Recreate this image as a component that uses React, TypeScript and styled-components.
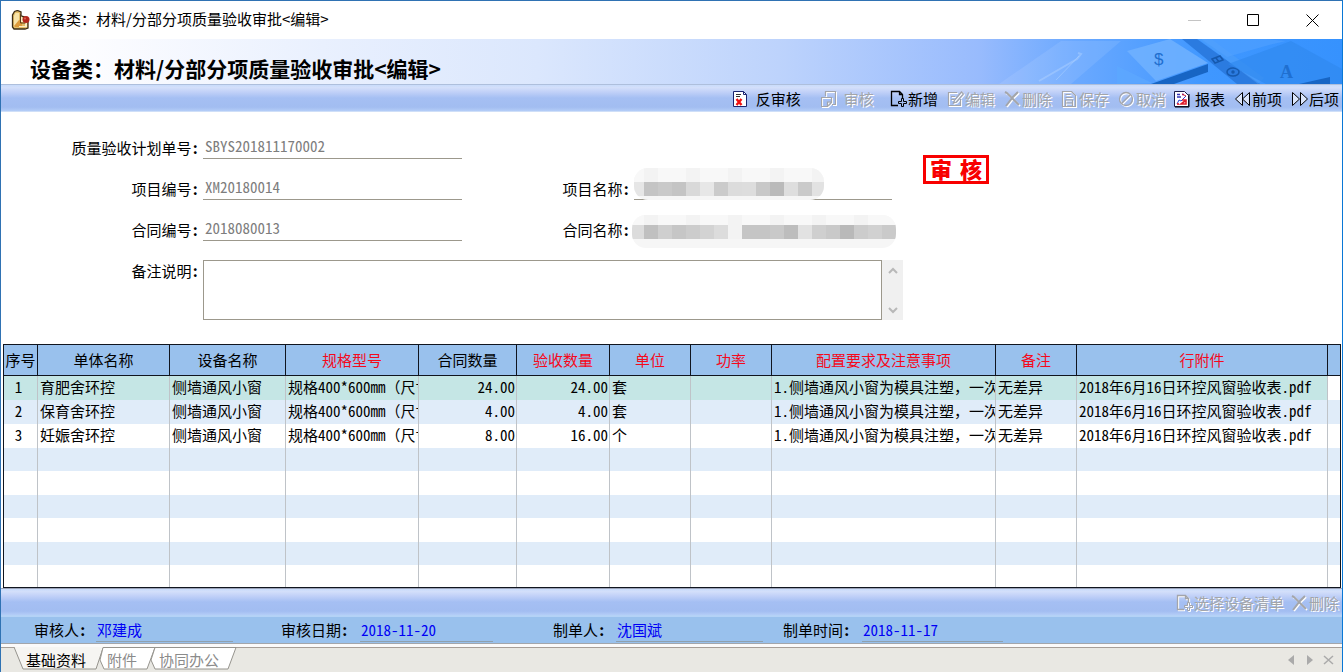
import React from "react";
import styled, { createGlobalStyle, css } from "styled-components";

const GlobalStyle = createGlobalStyle`
  * { box-sizing: border-box; }
  body { margin: 0; background: #fff; }
  body, button, input, textarea {
    font-family: "Noto Sans CJK SC", "Liberation Sans", sans-serif;
    font-size: 15px;
    line-height: 20px;
    font-feature-settings: "hwid";
    color: #000;
  }
  button { border: 0; padding: 0; background: none; white-space: nowrap; }
`;

const Window = styled.div`
  min-height: 100vh;
  display: flex;
  flex-direction: column;
  border: 1px solid #2f72b3;
  border-right-color: #0a78d6;
  border-bottom: 0;
  background: #fff;
`;

/* ---------- title bar ---------- */
const TitleBar = styled.header`
  display: flex;
  align-items: center;
  height: 38px;
  padding-left: 10px;
`;
const WindowTitle = styled.span`
  margin-left: 5px;
  padding-bottom: 2px;
  flex: 1;
  font-feature-settings: normal;
`;
const CaptionButton = styled.button`
  display: flex;
  align-items: center;
  justify-content: center;
  width: 59px;
  height: 38px;
`;

/* ---------- banner ---------- */
const Banner = styled.div`
  display: flex;
  justify-content: space-between;
  align-items: center;
  height: 45px;
  padding-left: 29px;
  background: linear-gradient(90deg, #fff 0, #fdfdff 6%, #e9f0fe 24%, #dbe7fd 40%, #bdd3fc 58%, #98bbfd 73%, #6ba9ff 80%, #3f97ff 90%, #3692fe 100%);
`;
const Heading = styled.h1`
  margin: 0;
  padding-top: 13px;
  font-size: 21px;
  line-height: 28px;
  font-weight: 700;
  font-feature-settings: normal;
  white-space: nowrap;
`;

/* ---------- tool bars ---------- */
const ToolStrip = styled.div`
  display: flex;
  justify-content: flex-end;
  align-items: center;
  padding: 2px 3px 0 0;
  background: linear-gradient(#c9dcfb 0, #d3dffa 10%, #c3d2f8 25%, #a5bff3 50%, #a2bdf1 85%, #b4cdf7 100%);
`;
const TopTools = styled(ToolStrip)`
  height: 28px;
  border-top: 1px solid #aebfdc;
  border-bottom: 1px solid #cfdff8;
`;
const ListTools = styled(ToolStrip)`
  height: 29px;
  gap: 7px;
  border-top: 1px solid #9aa2b8;
  border-bottom: 2px solid #b4d2f6;
`;
const ToolGroup = styled.div<{ $gap: number; $after: number }>`
  display: flex;
  gap: ${(p) => p.$gap}px;
  margin-right: ${(p) => p.$after}px;
`;
const ToolButton = styled.button<{ $gap?: number }>`
  display: flex;
  align-items: center;
  gap: ${(p) => p.$gap ?? 1}px;
  ${(p) =>
    p.disabled &&
    css`
      color: #a3a5aa;
      text-shadow: 1px 1px 0 #fff;
      svg { filter: drop-shadow(1px 1px 0 #fff); }
    `}
`;

/* ---------- form ---------- */
const Form = styled.form`
  position: relative;
  display: grid;
  grid-template-columns: 198px 259px 164px 258px;
  column-gap: 4px;
  align-content: start;
  padding: 25px 0 24px;
`;
const FieldLabel = styled.label`
  padding-top: 1px;
  text-align: right;
  white-space: nowrap;
  &::after { content: ":"; font-weight: 700; }
`;
const Field = styled.div<{ $newLine?: boolean }>`
  position: relative;
  height: 41px;
`;
const RowFiller = styled.div`
  grid-column: 3 / -1;
`;
const LineInput = styled.input`
  display: block;
  width: 100%;
  height: 22px;
  padding: 0 2px 4px;
  border: 0;
  border-bottom: 1px solid #9c988c;
  border-radius: 0;
  background: transparent;
  color: #7d7d7d;
  outline: 0;
`;
const Mosaic = styled.svg<{ $left: number; $top: number }>`
  position: absolute;
  left: ${(p) => p.$left}px;
  top: ${(p) => p.$top}px;
`;
const NoteBox = styled.div`
  display: flex;
  grid-column: 2 / -1;
  height: 60px;
`;
const NoteArea = styled.textarea`
  flex: 0 0 679px;
  border: 1px solid #9c988c;
  border-radius: 0;
  resize: none;
  outline: 0;
  overflow: hidden;
`;
const ScrollTrack = styled.div`
  display: flex;
  flex: 0 0 21px;
  flex-direction: column;
  justify-content: space-between;
  background: #f0f0f0;
  button { height: 20px; line-height: 0; }
`;
const Stamp = styled.div`
  position: absolute;
  left: 922px;
  top: 43px;
  width: 66px;
  height: 29px;
  border: 3px solid #f80000;
  color: #f80000;
  font-size: 22px;
  line-height: 20px;
  font-weight: 900;
  display: flex;
  justify-content: space-around;
`;

/* ---------- table ---------- */
const GridTable = styled.table`
  table-layout: fixed;
  width: calc(100% - 3px);
  margin-left: 2px;
  border-collapse: separate;
  border-spacing: 0;
  border: 1px solid #10151f;
`;
const HeadCell = styled.th<{ $red?: boolean }>`
  height: 31px;
  padding: 0;
  font-weight: 400;
  white-space: nowrap;
  background: #99c1ed;
  color: ${(p) => (p.$red ? "#f5091c" : "#000")};
  border-right: 1px solid #10151f;
  border-bottom: 1px solid #10151f;
  &:last-child { border-right: 0; }
`;
const Row = styled.tr<{ $tone: string; $height: number }>`
  height: ${(p) => p.$height}px;
  background: ${(p) => p.$tone};
`;
const Cell = styled.td<{ $align?: string; $plain?: boolean }>`
  padding: 0 1px 2px 2px;
  overflow: hidden;
  white-space: nowrap;
  text-align: ${(p) => p.$align ?? "left"};
  border-right: 1px solid #bfc3c8;
  ${(p) => p.$align === "center" && css`padding-left: 0; padding-right: 4px;`}
  ${(p) => p.$plain && css`background: #fff;`}
  &:last-child { border-right: 0; }
`;
const FullWidth = styled.span`
  font-feature-settings: normal;
`;

/* ---------- status ---------- */
const StatusBar = styled.div`
  display: flex;
  align-items: flex-start;
  height: 27px;
  padding-left: 33px;
  background: #99c1ed;
  border-bottom: 1px solid #a3a6ab;
`;
const StatusItem = styled.div<{ $labelWidth: number; $valueWidth: number; $after: number }>`
  display: flex;
  margin-right: ${(p) => p.$after}px;
  label { width: ${(p) => p.$labelWidth}px; padding-top: 3px; white-space: nowrap; }
  label::after { content: ":"; font-weight: 700; }
  input {
    width: ${(p) => p.$valueWidth}px;
    height: 25px;
    padding: 0 1px 0;
    border: 0;
    border-bottom: 1px solid #8fa0ae;
    border-radius: 0;
    background: transparent;
    color: #0000f5;
    outline: 0;
  }
`;

/* ---------- page tabs ---------- */
const TabBar = styled.footer`
  display: flex;
  justify-content: space-between;
  flex: 1;
  min-height: 28px;
  padding-top: 3px;
  background: #fbfafa;
`;
const TabTrack = styled.nav`
  display: flex;
  flex: 1;
  align-items: flex-start;
  justify-content: space-between;
  padding: 0 7px 0 13px;
  background: #e9e8e3;
  border-top: 1px solid #a79f98;
`;
const TabList = styled.div`
  display: flex;
`;
const Tab = styled.button<{ $active?: boolean; $width: number }>`
  position: relative;
  width: ${(p) => p.$width}px;
  height: 23px;
  padding-left: ${(p) => (p.$active ? 12 : 4)}px;
  text-align: left;
  color: ${(p) => (p.$active ? "#000" : "#8b8b8b")};
  span { position: relative; }
  svg { position: absolute; left: 0; top: -1px; overflow: visible; }
`;
const TabNav = styled.div`
  display: flex;
  gap: 7px;
  padding-top: 6px;
  button { line-height: 0; }
`;

/* ---------- drawings ---------- */
const AppIcon = () => (
  <svg width="20" height="20" viewBox="0 0 20 20" aria-hidden="true">
    <path d="M1.500 17V5l2-3.500 3-1L10 2v4l4 1 3 3v8l-3 1H3Z" fill="#e3bd68" stroke="#3b2c16" strokeWidth="1.300" />
    <path d="M3 16V6l1.500-3L8 3v8l-4 6Z" fill="#f7e3a8" />
    <path d="M3 16 8 10h3v7H4Z" fill="#dd9a3c" />
    <path d="M9 5v7h5v4H8v1h8v-4" fill="#fbeec6" />
    <path d="M9.500 4v9h5" fill="none" stroke="#5a3c18" />
    <circle cx="15" cy="9.500" r="3.500" fill="#b3261c" />
    <circle cx="14" cy="8.500" r="1" fill="#e0665a" />
  </svg>
);

const BannerArt = () => (
  <svg width="343" height="45" viewBox="0 0 343 45" aria-hidden="true">
    <path d="M0 45 62 2l60 0-50 43Z" fill="#fff" opacity=".09" />
    <path d="M40 42 78 20l4-5-3-1" fill="none" stroke="#b9d8ff" strokeWidth="2" opacity=".4" />
    <path d="M57 41 80 17" stroke="#a9cfff" opacity=".6" />
    <path d="M128 12 171 0l38 24-52 18Z" fill="#72b3ff" opacity=".8" />
    <path d="m152 45 57-20v8l-34 12Z" fill="#1765c4" />
    <path d="m118 27 35 17-35 1Z" fill="#5ca7ff" opacity=".8" />
    <path d="M183 0h15l63 45h-23Z" fill="#2b7be0" />
    <path d="M200 0h12l53 39-6 6Z" fill="#4f9ff8" opacity=".5" />
    <g fill="none" stroke="#1559ae" strokeWidth="1.5">
      <path d="m213 20 8-3 3 4-8 3Zm4-1 3 4" />
      <ellipse cx="234" cy="33" rx="6" ry="4" />
      <circle cx="234" cy="33" r="1" />
    </g>
    <path d="m229 25 63-23 51 28v15h-76Z" fill="#2f88ee" opacity=".65" />
    <path d="m228 18 42-12 17-4-20-2h-65Z" fill="#55a4ff" opacity=".5" />
    <path d="m300 45 31-7v7Z" fill="#1765c4" />
    <text x="155" y="26" fontSize="17" fontWeight="400" fontFamily="Liberation Sans" fill="#1f6fd0">$</text>
    <text x="281" y="39" fontSize="18" fontWeight="700" fontFamily="Liberation Serif" fill="#1f6fd0">A</text>
  </svg>
);

type IconName = "reject" | "approve" | "add" | "edit" | "delete" | "save" | "cancel" | "report" | "prev" | "next";

const shapes: Record<IconName, React.ReactNode> = {
  reject: (
    <>
      <path d="M1.500 1.500h10l3 3v12h-13Z" fill="#fff" stroke="#1a2470" />
      <path d="M11.500 1.500v3h3" fill="none" stroke="#1a2470" />
      <path d="M4 4.500h5M4 6.500h4" stroke="#333" />
      <path d="m4.500 9 5 6m0-6-5 6" stroke="#f01010" strokeWidth="2.400" />
    </>
  ),
  approve: <path d="M4.500 6V1.500h10v13H11M.5 7.500h10v5l-4 4h-6ZM6.500 16v-4h4" strokeWidth="1.200" />,
  add: (
    <>
      <path d="M8 15.500H1.500v-14h8l3 3V8M9.500 1.500v3h3" strokeWidth="1.300" />
      <path d="M11.500 8.500h2v3h3v2h-3v3h-2v-3h-3v-2h3Z" />
    </>
  ),
  edit: <path d="M10 2.500H1.500v13h12V9M4 6.500h4M4 9.500h3M6.500 13l1-3 7-8 2 2-7 8Z" strokeWidth="1.200" />,
  delete: <path d="m1 2 2 1 12 12M14 2l-5 5-7 9" strokeWidth="2" />,
  save: <path d="M1.500 1.500h9l4 4v11h-13ZM4.500 4.500h5M4.500 7.500h7M4.500 16v-6h7v6M4 13h8" strokeWidth="1.200" />,
  cancel: (
    <>
      <circle cx="8" cy="9" r="6.500" strokeWidth="1.300" />
      <path d="m3.500 13.500 9-9" strokeWidth="1.300" />
    </>
  ),
  report: (
    <>
      <path d="M1.500 1.500h10l4 4v11h-14Z" fill="#fff" stroke="#1b1b4b" />
      <path d="M16 4v13H2" stroke="#000" />
      <path d="M4 4.500h3M9 4.500h2M4 7h4" stroke="#3434b8" strokeWidth="1.500" />
      <path d="m4 14 2-4 2 1 5-5" stroke="#2b3fd0" />
      <path d="M9 10h4v4H8l4-3M5 13v2" stroke="#e01c2c" strokeWidth="1.600" />
      <path d="m9 4 4 2" stroke="#e01c2c" />
    </>
  ),
  prev: <path d="M8.500 2.500v13L1.500 9ZM15.500 2.500v13L8.500 9Z" fill="#dbe6fc" />,
  next: <path d="M1.500 2.500v13L8.500 9ZM9.500 2.500v13L16.500 9Z" fill="#dbe6fc" />,
};

const Icon = ({ name, width = 17 }: { name: IconName; width?: number }) => (
  <svg width={width} height="18" viewBox={`0 0 ${width} 18`} fill="none" stroke="currentColor" aria-hidden="true">
    {shapes[name]}
  </svg>
);

type MosaicProps = { id: string; left: number; top: number; width: number; height: number; band: number; shift: number; tones: string[] };

const MosaicPatch = ({ id, left, top, width, height, band, shift, tones }: MosaicProps) => (
  <Mosaic $left={left} $top={top} width={width} height={height} aria-hidden="true">
    <clipPath id={id}>
      <rect width={width} height={height} rx="14" />
    </clipPath>
    <g clipPath={`url(#${id})`}>
      <rect width={width} height={height} fill="#f6f6f6" />
      {tones.map((tone, i) => (
        <g key={i}>
          <rect x={i * 14 - shift} y="0" width="14" height={band} fill={i % 3 === 1 ? "#f3f3f3" : "#f8f8f8"} />
          <rect x={i * 14 - shift} y={band} width="14" height="14" fill={tone} />
        </g>
      ))}
    </g>
  </Mosaic>
);

const projectTones = ["#e6e6e6", "#c4c4c4", "#c9c9c9", "#c4c4c4", "#d9d9d9", "#e7e7e7", "#cbcbcb", "#dcdcdc", "#dddddd", "#c8c8c8", "#bababa", "#dedede", "#cacaca", "#e2e2e2"];
const contractTones = ["#dcdcdc", "#c0c0c0", "#cfcfcf", "#c6c6c6", "#cccccc", "#d3d3d3", "#dcdcdc", "#f3f3f3", "#c5c5c5", "#c5c5c5", "#c9c9c9", "#bdbdbd", "#e2e2e2", "#cfcfcf", "#c9c9c9", "#b9b9b9", "#cccccc", "#d1d1d1", "#cacaca"];

/* ---------- data ---------- */
const columns: { title: string; width?: number; red?: boolean; align?: string }[] = [
  { title: "序号", width: 34, align: "center" },
  { title: "单体名称", width: 132 },
  { title: "设备名称", width: 116 },
  { title: "规格型号", width: 133, red: true },
  { title: "合同数量", width: 98, align: "right" },
  { title: "验收数量", width: 93, red: true, align: "right" },
  { title: "单位", width: 81, red: true },
  { title: "功率", width: 81, red: true },
  { title: "配置要求及注意事项", width: 224, red: true },
  { title: "备注", width: 81, red: true },
  { title: "行附件", red: true },
  { title: "", width: 12 },
];

const spec = "规格400*600mm（尺寸";
const requirement = "1.侧墙通风小窗为模具注塑，一次";
const attachment = "2018年6月16日环控风窗验收表.pdf";
const records = [
  ["1", "育肥舍环控", "侧墙通风小窗", spec, "24.00", "24.00", "套", "", requirement, "无差异", attachment, ""],
  ["2", "保育舍环控", "侧墙通风小窗", spec, "4.00", "4.00", "套", "", requirement, "无差异", attachment, ""],
  ["3", "妊娠舍环控", "侧墙通风小窗", spec, "8.00", "16.00", "个", "", requirement, "无差异", attachment, ""],
];
const recordTones = ["#c5e6e5", "#e0ecf9", "#ffffff"];
const emptyRowHeights = [23, 24, 23, 24, 23, 22];

/* Chinese punctuation keeps its full width among half-width digits. */
const CellText = ({ text }: { text: string }) => (
  <>
    {text.split(/([（，])/).map((part, i) => (i % 2 ? <FullWidth key={i}>{part}</FullWidth> : part))}
  </>
);

const statusItems = [
  { id: "auditor", label: "审核人", value: "邓建成", labelWidth: 62, valueWidth: 137, after: 48 },
  { id: "auditDate", label: "审核日期", value: "2018-11-20", labelWidth: 79, valueWidth: 133, after: 60 },
  { id: "maker", label: "制单人", value: "沈国斌", labelWidth: 63, valueWidth: 147, after: 20 },
  { id: "makeTime", label: "制单时间", value: "2018-11-17", labelWidth: 79, valueWidth: 141, after: 0 },
];

export default function App() {
  return (
    <>
      <GlobalStyle />
      <Window>
        <TitleBar>
          <AppIcon />
          <WindowTitle>设备类：材料/分部分项质量验收审批&lt;编辑&gt;</WindowTitle>
          <CaptionButton aria-label="最小化" disabled>
            <svg width="13" height="13"><path d="M0 6.500h13" stroke="#c4c4c4" /></svg>
          </CaptionButton>
          <CaptionButton aria-label="最大化">
            <svg width="13" height="13"><path d="M.5.5h11v11H.5Z" fill="none" stroke="#000" /></svg>
          </CaptionButton>
          <CaptionButton aria-label="关闭">
            <svg width="13" height="13"><path d="m.5.5 12 12m0-12-12 12" stroke="#000" /></svg>
          </CaptionButton>
        </TitleBar>

        <Banner>
          <Heading>设备类：材料/分部分项质量验收审批&lt;编辑&gt;</Heading>
          <BannerArt />
        </Banner>

        <TopTools>
          <ToolGroup $gap={20} $after={16}>
            <ToolButton $gap={9}><Icon name="reject" width={15} />反审核</ToolButton>
            <ToolButton $gap={8} disabled><Icon name="approve" width={15} />审核</ToolButton>
          </ToolGroup>
          <ToolGroup $gap={9} $after={7}>
            <ToolButton><Icon name="add" />新增</ToolButton>
            <ToolButton disabled><Icon name="edit" />编辑</ToolButton>
            <ToolButton disabled><Icon name="delete" />删除</ToolButton>
            <ToolButton disabled><Icon name="save" />保存</ToolButton>
            <ToolButton disabled><Icon name="cancel" />取消</ToolButton>
          </ToolGroup>
          <ToolGroup $gap={9} $after={0}>
            <ToolButton $gap={5}><Icon name="report" />报表</ToolButton>
            <ToolButton><Icon name="prev" />前项</ToolButton>
            <ToolButton><Icon name="next" />后项</ToolButton>
          </ToolGroup>
        </TopTools>

        <Form onSubmit={(e) => e.preventDefault()}>
          <FieldLabel htmlFor="planNo">质量验收计划单号</FieldLabel>
          <Field><LineInput id="planNo" defaultValue="SBYS201811170002" /></Field>
          <RowFiller />
          <FieldLabel htmlFor="projectNo">项目编号</FieldLabel>
          <Field><LineInput id="projectNo" defaultValue="XM20180014" /></Field>
          <FieldLabel htmlFor="projectName">项目名称</FieldLabel>
          <Field>
            <LineInput id="projectName" />
            <MosaicPatch id="projectMask" left={0} top={-10} width={190} height={32} band={14} shift={4} tones={projectTones} />
          </Field>
          <FieldLabel htmlFor="contractNo">合同编号</FieldLabel>
          <Field><LineInput id="contractNo" defaultValue="2018080013" /></Field>
          <FieldLabel htmlFor="contractName">合同名称</FieldLabel>
          <Field>
            <LineInput id="contractName" />
            <MosaicPatch id="contractMask" left={-2} top={-4} width={264} height={33} band={10} shift={2} tones={contractTones} />
          </Field>
          <FieldLabel htmlFor="note">备注说明</FieldLabel>
          <NoteBox>
            <NoteArea id="note" />
            <ScrollTrack>
              <button type="button" aria-label="向上滚动">
                <svg width="10" height="7"><path d="m1 6 4-4 4 4" fill="none" stroke="#b8b8b8" strokeWidth="2" /></svg>
              </button>
              <button type="button" aria-label="向下滚动">
                <svg width="10" height="7"><path d="m1 1 4 4 4-4" fill="none" stroke="#b8b8b8" strokeWidth="2" /></svg>
              </button>
            </ScrollTrack>
          </NoteBox>
          <Stamp><span>审</span><span>核</span></Stamp>
        </Form>

        <GridTable>
          <colgroup>
            {columns.map((c, i) => <col key={i} width={c.width} />)}
          </colgroup>
          <thead>
            <tr>{columns.map((c, i) => <HeadCell key={i} $red={c.red}>{c.title}</HeadCell>)}</tr>
          </thead>
          <tbody>
            {records.map((record, r) => (
              <Row key={record[0]} $tone={recordTones[r]} $height={24}>
                {record.map((text, i) => (
                  <Cell key={i} $align={columns[i].align} $plain={r === 0 && i === 11}><CellText text={text} /></Cell>
                ))}
              </Row>
            ))}
            {emptyRowHeights.map((height, r) => (
              <Row key={r} $tone={r % 2 ? "#ffffff" : "#e0ecf9"} $height={height}>
                {columns.map((_, i) => <Cell key={i} />)}
              </Row>
            ))}
          </tbody>
        </GridTable>

        <ListTools>
          <ToolButton disabled><Icon name="add" />选择设备清单</ToolButton>
          <ToolButton disabled><Icon name="delete" />删除</ToolButton>
        </ListTools>

        <StatusBar>
          {statusItems.map((s) => (
            <StatusItem key={s.id} $labelWidth={s.labelWidth} $valueWidth={s.valueWidth} $after={s.after}>
              <label htmlFor={s.id}>{s.label}</label>
              <input id={s.id} defaultValue={s.value} />
            </StatusItem>
          ))}
        </StatusBar>

        <TabBar>
          <TabTrack>
            <TabList>
              <Tab $active $width={89}>
                <svg width="89" height="23">
                  <path d="M0 0 9 22h73l7-21V0Z" fill="#f6f5f2" />
                  <path d="M0 0 9 22h73l7-21" fill="none" stroke="#96948e" />
                </svg>
                <span>基础资料</span>
              </Tab>
              <Tab $width={52}>
                <svg width="52" height="23">
                  <path d="M0 .5h52L44 22H1l-4-9Z" fill="#fff" stroke="#96948e" />
                </svg>
                <span>附件</span>
              </Tab>
              <Tab $width={81}>
                <svg width="81" height="23">
                  <path d="M0 .5h81L73 22H0l-4-9Z" fill="#fff" stroke="#96948e" />
                </svg>
                <span>协同办公</span>
              </Tab>
            </TabList>
            <TabNav>
              <button aria-label="上一页"><svg width="12" height="12"><path d="M9 1v10L3 6Z" fill="#aaa" /></svg></button>
              <button aria-label="下一页"><svg width="12" height="12"><path d="M3 1v10l6-5Z" fill="#aaa" /></svg></button>
              <button aria-label="关闭页"><svg width="12" height="12"><path d="m1 2 9 8m0-8-9 8" stroke="#aaa" strokeWidth="1.500" /></svg></button>
            </TabNav>
          </TabTrack>
        </TabBar>
      </Window>
    </>
  );
}
